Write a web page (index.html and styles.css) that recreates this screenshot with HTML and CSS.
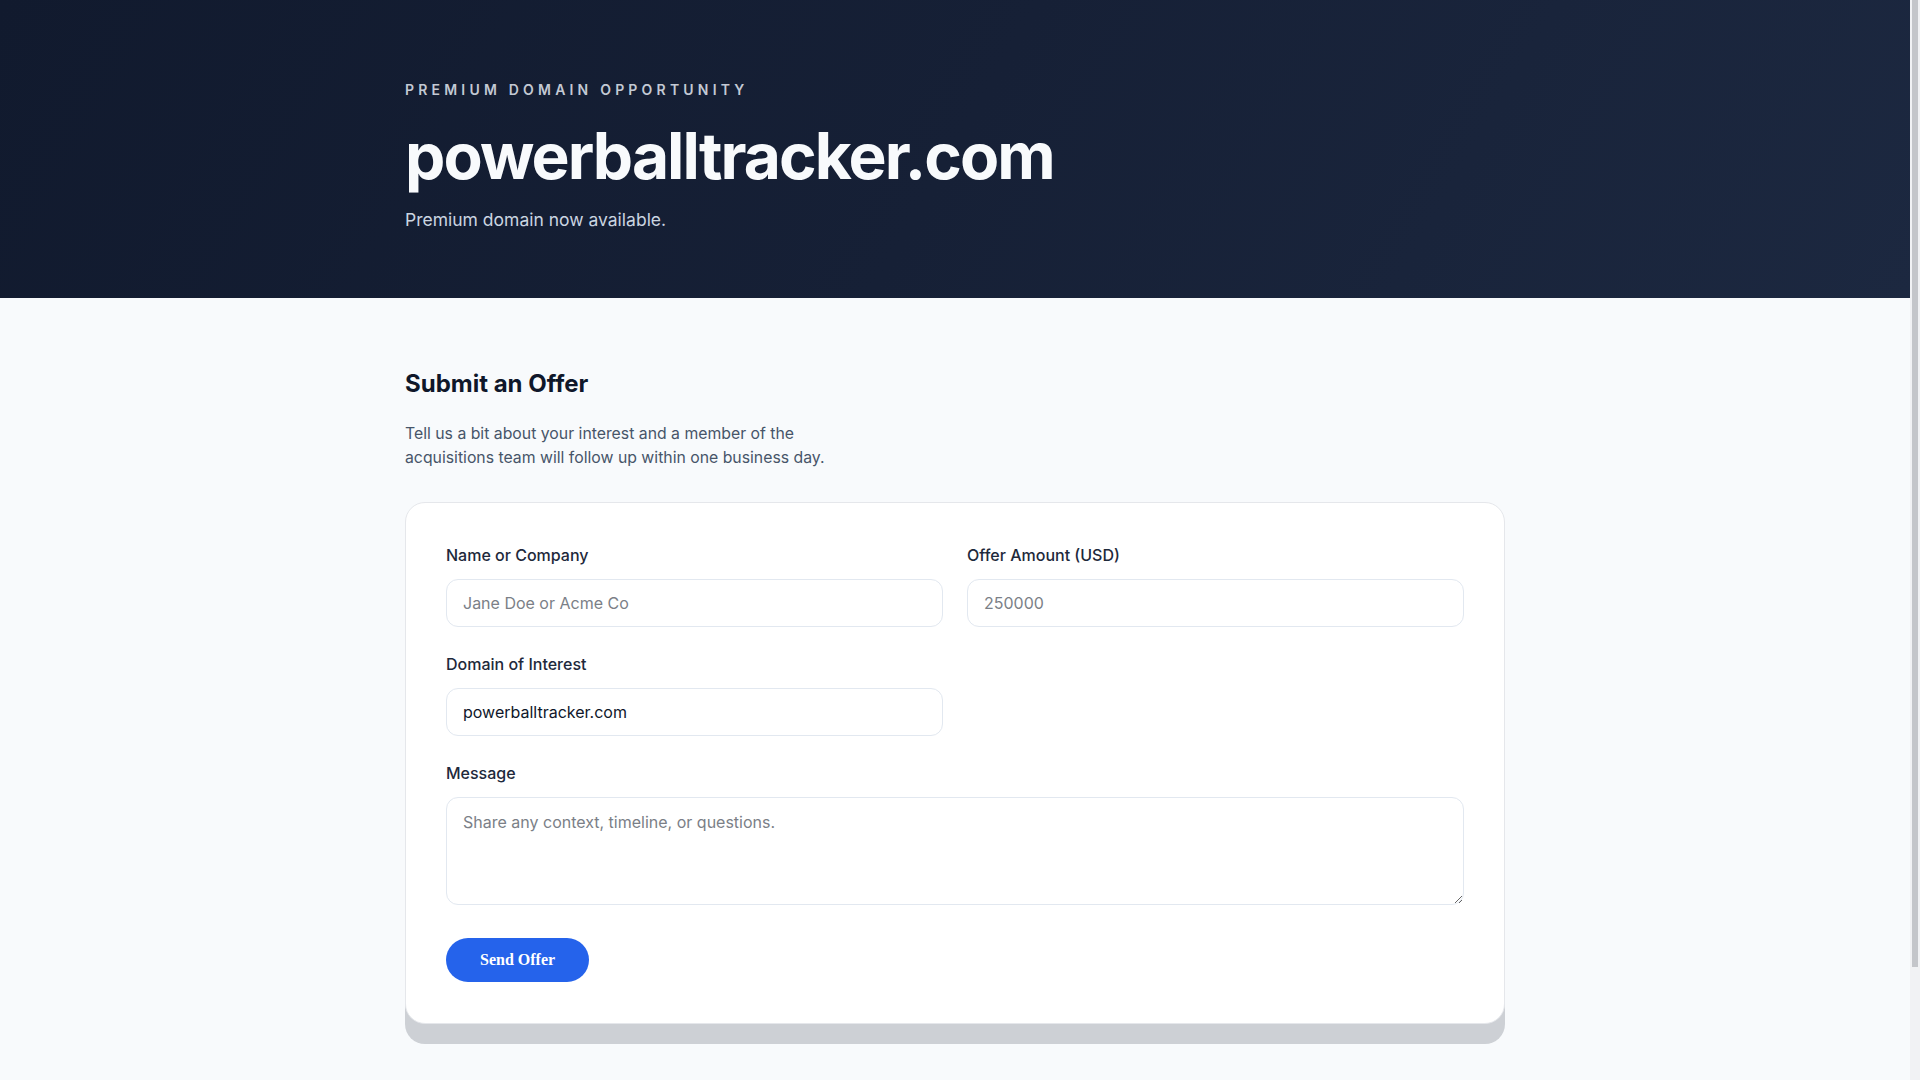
FILE: index.html
```html
<!DOCTYPE html>
<html lang="en">
<head>
<meta charset="utf-8">
<title>powerballtracker.com</title>
<link rel="stylesheet" href="styles.css">
</head>
<body>
<header class="hero">
  <div class="container">
    <p class="eyebrow">Premium Domain Opportunity</p>
    <h1 class="title">powerballtracker.com</h1>
    <p class="subtitle">Premium domain now available.</p>
  </div>
</header>
<main class="offer">
  <div class="container">
    <h2 class="offer-title">Submit an Offer</h2>
    <p class="offer-desc">Tell us a bit about your interest and a member of the acquisitions team will follow up within one business day.</p>
    <form class="card">
      <div class="form-grid">
        <div class="field">
          <label class="label" for="name">Name or Company</label>
          <input class="input" id="name" type="text" placeholder="Jane Doe or Acme Co">
        </div>
        <div class="field">
          <label class="label" for="amount">Offer Amount (USD)</label>
          <input class="input" id="amount" type="text" placeholder="250000">
        </div>
        <div class="field">
          <label class="label" for="domain">Domain of Interest</label>
          <input class="input" id="domain" type="text" value="powerballtracker.com">
        </div>
        <div class="field field-wide">
          <label class="label" for="message">Message</label>
          <textarea class="input textarea" id="message" placeholder="Share any context, timeline, or questions."></textarea>
        </div>
      </div>
      <button class="btn" type="button">Send Offer</button>
    </form>
  </div>
</main>
</body>
</html>
```

FILE: styles.css
```css
* { box-sizing: border-box; }

html {
  margin: 0;
  padding: 0;
  /* scrollbar gutter strip as seen in the reference */
  background:
    linear-gradient(#c4c6ca, #c4c6ca) no-repeat right 2px top 0 / 6px 967px,
    #f1f2f4;
}

body {
  margin: 0 10px 0 0;
  padding: 0;
  font-family: Inter, "Noto Sans", "Liberation Sans", sans-serif;
  background: #f8fafc;
  color: #0f172a;
}

.container {
  width: 1100px;
  margin: 0 auto;
}

.hero {
  background: linear-gradient(120deg, #111a2e 0%, #162036 50%, #1c2840 100%);
  height: 298px;
  padding-top: 80px;
}

.eyebrow {
  margin: 0 0 21px;
  font-size: 14px;
  line-height: 20px;
  font-weight: 600;
  letter-spacing: 0.3em;
  text-transform: uppercase;
  color: #c3c9d4;
}

.title {
  margin: 0 0 14px;
  font-size: 64px;
  line-height: 70px;
  font-weight: 700;
  letter-spacing: -0.03em;
  color: #f8fafc;
}

.subtitle {
  margin: 0;
  font-size: 17.5px;
  line-height: 29px;
  color: #cbd5e1;
}

.offer {
  padding: 70px 0 163px;
}

.offer-title {
  margin: 0 0 23px;
  font-size: 24px;
  line-height: 31px;
  font-weight: 700;
  color: #0f172a;
}

.offer-desc {
  margin: 0 0 32px;
  max-width: 440px;
  font-size: 15.8px;
  line-height: 24px;
  color: #475569;
}

.card {
  background: #ffffff;
  border: 1px solid #e5e7eb;
  border-radius: 20px;
  padding: 41px 40px 41px;
  box-shadow: 0 20px 0 #cdd0d5;
}

.form-grid {
  display: grid;
  grid-template-columns: 1fr 1fr;
  column-gap: 24px;
  row-gap: 26px;
}

.field {
  display: flex;
  flex-direction: column;
}

.field-wide {
  grid-column: 1 / -1;
}

.label {
  font-size: 16px;
  line-height: 22px;
  font-weight: 500;
  color: #1e293b;
  margin-bottom: 13px;
}

.input {
  height: 48px;
  padding: 0 16px;
  border: 1px solid #e2e8f0;
  border-radius: 12px;
  background: #ffffff;
  font-family: inherit;
  font-size: 16px;
  color: #0f172a;
  outline: none;
}

.input::placeholder {
  color: #7b7f87;
}

.textarea {
  height: 108px;
  padding: 12px 16px;
  line-height: 24px;
  resize: vertical;
}

.btn {
  margin-top: 33px;
  height: 44px;
  padding: 0 34px;
  border: none;
  border-radius: 999px;
  background: #2563eb;
  color: #ffffff;
  font-family: "Liberation Serif", "Times New Roman", serif;
  font-size: 16px;
  font-weight: 700;
  cursor: pointer;
}
```
